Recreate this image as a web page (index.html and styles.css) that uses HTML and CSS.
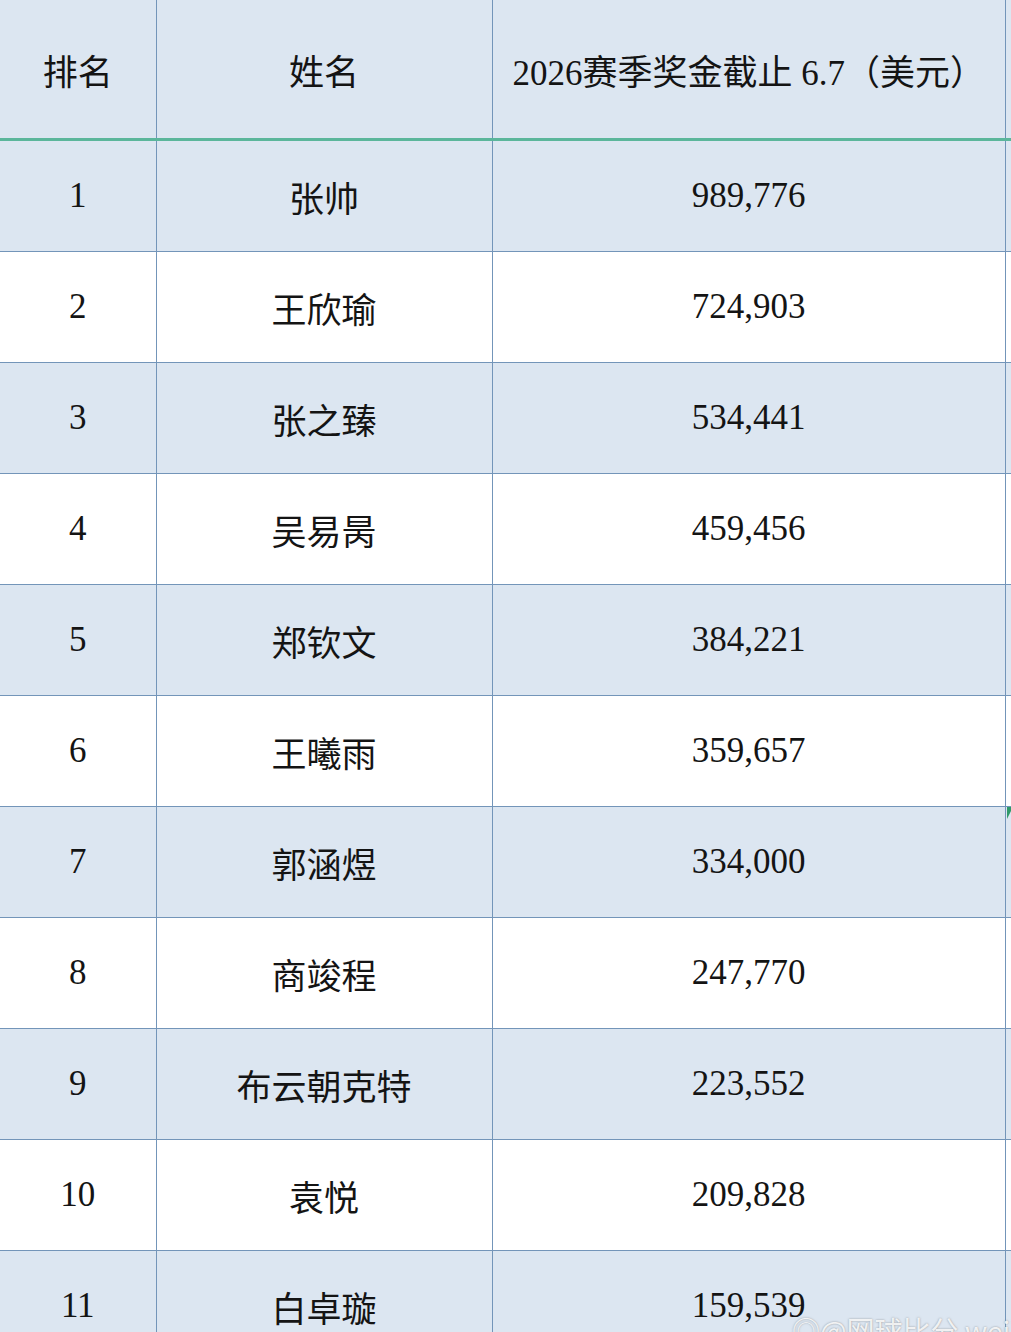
FILE: index.html
```html
<!DOCTYPE html>
<html lang="zh-CN">
<head>
<meta charset="utf-8">
<title>2026赛季奖金</title>
<link rel="stylesheet" href="styles.css">
</head>
<body>
<div class="sheet">
  <table class="prize">
    <colgroup>
      <col class="c-rank"><col class="c-name"><col class="c-money"><col class="c-edge">
    </colgroup>
    <thead>
      <tr><th>排名</th><th>姓名</th><th class="money-head">2026赛季奖金截止 6.7（美元）</th><th class="edge"></th></tr>
    </thead>
    <tbody>
      <tr class="blue"><td>1</td><td>张帅</td><td>989,776</td><td class="edge"></td></tr>
      <tr><td>2</td><td>王欣瑜</td><td>724,903</td><td class="edge"></td></tr>
      <tr class="blue"><td>3</td><td>张之臻</td><td>534,441</td><td class="edge"></td></tr>
      <tr><td>4</td><td>吴易昺</td><td>459,456</td><td class="edge"></td></tr>
      <tr class="blue"><td>5</td><td>郑钦文</td><td>384,221</td><td class="edge"></td></tr>
      <tr><td>6</td><td>王曦雨</td><td>359,657</td><td class="edge"></td></tr>
      <tr class="blue"><td>7</td><td>郭涵煜</td><td>334,000</td><td class="edge"><span class="marker"></span></td></tr>
      <tr><td>8</td><td>商竣程</td><td>247,770</td><td class="edge"></td></tr>
      <tr class="blue"><td>9</td><td>布云朝克特</td><td>223,552</td><td class="edge"></td></tr>
      <tr><td>10</td><td>袁悦</td><td>209,828</td><td class="edge"></td></tr>
      <tr class="blue"><td>11</td><td>白卓璇</td><td>159,539</td><td class="edge"></td></tr>
    </tbody>
  </table>
  <div class="watermark">◎@网球比分 weibo</div>
</div>
</body>
</html>
```
FILE: styles.css
```css
html, body {
  margin: 0;
  padding: 0;
  overflow: hidden;
  background: #ffffff;
}
.sheet {
  position: relative;
  width: 1011px;
  height: 1332px;
  overflow: hidden;
}
.prize {
  border-collapse: collapse;
  table-layout: fixed;
  width: 1011px;
  font-family: "Liberation Serif", "Noto Sans CJK SC", serif;
  font-size: 35px;
  color: #141414;
}
.c-rank { width: 156px; }
.c-name { width: 336px; }
.c-money { width: 513px; }
.c-edge { width: 6px; }
.prize th, .prize td {
  padding: 0;
  text-align: center;
  vertical-align: middle;
  border-right: 1px solid #7395b9;
  border-bottom: 1px solid #7395b9;
  font-weight: normal;
  white-space: nowrap;
}
.prize th {
  height: 138px;
  background: #dce6f1;
  border-bottom: 3px solid #5bb69b;
}
.prize th.money-head {
  text-align: left;
  padding-left: 20px;
}
.prize td {
  height: 110px;
}
.prize tr.blue td {
  background: #dce6f1;
}
.prize .edge {
  border-right: none;
  position: relative;
}
.marker {
  position: absolute;
  left: 1px;
  top: 0;
  width: 0;
  height: 0;
  border-top: 12px solid #2f9a6a;
  border-right: 6px solid transparent;
}
.watermark {
  position: absolute;
  left: 792px;
  top: 1310px;
  font-family: "Noto Sans CJK SC", sans-serif;
  font-size: 28px;
  color: rgba(255, 255, 255, 0.85);
  text-shadow: 0 0 2px rgba(90, 90, 90, 0.6);
  white-space: nowrap;
}
```
